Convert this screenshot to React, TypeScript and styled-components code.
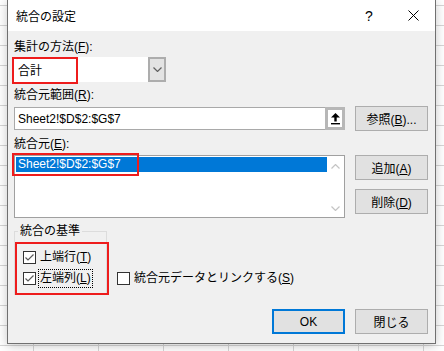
import styled, { createGlobalStyle } from 'styled-components';

const GlobalStyle = createGlobalStyle`
  html, body {
    margin: 0;
    height: 100%;
  }
  body {
    font-family: "Liberation Sans", "Noto Sans CJK JP", sans-serif;
    font-size: 12px;
    color: #000;
    overflow: hidden;
    background-color: #fff;
    background-image:
      linear-gradient(to right, #d6d6d6 1px, transparent 1px),
      linear-gradient(to bottom, #d6d6d6 1px, transparent 1px);
    background-size: 65px 20px;
    background-position: 33px 5px;
  }
`;

const Dialog = styled.div`
  box-sizing: border-box;
  width: 429px;
  margin: -1px 0 0 7px;
  border: 1px solid #707070;
  background: #f0f0f0;
  box-shadow: 0 2px 10px rgba(0, 0, 0, 0.22);
`;

const TitleBar = styled.div`
  display: flex;
  align-items: center;
  height: 31px;
  padding-left: 8px;
  background: #fff;
`;

const TitleText = styled.div`
  flex: 1;
  font-size: 12px;
`;

const CaptionButton = styled.div<{ $w: number }>`
  width: ${(p) => p.$w}px;
  height: 31px;
  display: flex;
  align-items: center;
  justify-content: center;
  font-family: "Liberation Sans", sans-serif;
  font-size: 14px;
`;

const Body = styled.div`
  padding: 8px 7px 9px 6px;
`;

const Label = styled.div<{ $gap: number }>`
  height: 16px;
  line-height: 16px;
  margin-top: ${(p) => p.$gap}px;
`;

const Key = styled.span`
  text-decoration: underline;
  text-underline-offset: 1px;
`;

const Combo = styled.div`
  position: relative;
  display: flex;
  width: 152px;
  height: 25px;
  margin-top: 2px;
`;

const ComboField = styled.div`
  flex: 1;
  display: flex;
  align-items: center;
  padding-left: 4px;
  background: #fff;
`;

const ComboButton = styled.div`
  box-sizing: border-box;
  width: 18px;
  display: flex;
  align-items: center;
  justify-content: center;
  background: #e3e3e3;
  border: 2px solid #adadad;
`;

const RedMark = styled.div<{ $l: number; $t: number; $w: number; $h: number }>`
  position: absolute;
  left: ${(p) => p.$l}px;
  top: ${(p) => p.$t}px;
  width: ${(p) => p.$w}px;
  height: ${(p) => p.$h}px;
  box-sizing: border-box;
  border: 2px solid #ee1c1c;
  pointer-events: none;
`;

const Row = styled.div<{ $gap: number; $align: string }>`
  display: grid;
  grid-template-columns: 331px 73px;
  column-gap: 10px;
  align-items: ${(p) => p.$align};
  margin-top: ${(p) => p.$gap}px;
`;

const RefInput = styled.div`
  display: flex;
  height: 23px;
`;

const RefField = styled.div`
  flex: 1;
  display: flex;
  align-items: center;
  padding-left: 3px;
  background: #fff;
  border: 1px solid #a9a9a9;
  border-right: none;
`;

const PickButton = styled.div`
  box-sizing: border-box;
  width: 20px;
  display: flex;
  align-items: center;
  justify-content: center;
  background: #fff;
  border: 3px solid #b7b7b7;
`;

const Button = styled.button<{ $primary?: boolean }>`
  box-sizing: border-box;
  width: 73px;
  height: 25px;
  padding: 0;
  font: inherit;
  color: #000;
  background: #e1e1e1;
  border: ${(p) => (p.$primary ? '2px solid #0078d7' : '1px solid #adadad')};
`;

const ButtonColumn = styled.div`
  display: flex;
  flex-direction: column;
  gap: 9px;
`;

const ListBox = styled.div`
  box-sizing: border-box;
  height: 63px;
  display: flex;
  background: #fff;
  border: 1px solid #a0a0a0;
`;

const ListItems = styled.div`
  flex: 1;
  padding: 1px 0 0 1px;
`;

const ListItem = styled.div<{ $selected?: boolean }>`
  position: relative;
  height: 15px;
  line-height: 15px;
  padding-left: 2px;
  color: ${(p) => (p.$selected ? '#fff' : '#000')};
  background: ${(p) => (p.$selected ? '#0078d7' : 'transparent')};
`;

const ScrollBar = styled.div`
  width: 17px;
  display: flex;
  flex-direction: column;
  justify-content: space-between;
  align-items: center;
  padding: 8px 0 6px;
`;

const Bottom = styled.div`
  display: flex;
  align-items: flex-start;
  margin-top: 5px;
`;

const Group = styled.fieldset`
  box-sizing: border-box;
  width: 93px;
  margin: 0;
  padding: 0;
  min-width: 0;
  border: 1px solid #dcdcdc;
`;

const Legend = styled.legend`
  margin-left: 3px;
  padding: 0 2px;
  line-height: 16px;
`;

const CheckList = styled.div`
  position: relative;
  display: flex;
  flex-direction: column;
  gap: 1px;
  padding: 8px 0 6px 8px;
`;

const CheckRow = styled.div<{ $top?: number }>`
  display: flex;
  align-items: center;
  height: 20px;
  margin-top: ${(p) => p.$top ?? 0}px;
  white-space: nowrap;
`;

const Box = styled.div`
  box-sizing: border-box;
  width: 13px;
  height: 13px;
  flex: none;
  display: flex;
  align-items: center;
  justify-content: center;
  background: #fff;
  border: 1px solid #333;
`;

const CheckText = styled.span<{ $focus?: boolean }>`
  margin-left: 2px;
  padding: 1px;
  line-height: 15px;
  border: 1px dotted ${(p) => (p.$focus ? '#000' : 'transparent')};
`;

const LinkOption = styled(CheckRow)`
  margin-left: 10px;
`;

const Footer = styled.div`
  display: flex;
  justify-content: flex-end;
  gap: 10px;
  margin-top: 14px;
`;

const Chevron = ({ up, color }: { up?: boolean; color: string }) => (
  <svg width="9" height="5" viewBox="0 0 9 5">
    <polyline
      points={up ? '0.5,4.5 4.5,0.5 8.5,4.5' : '0.5,0.5 4.5,4.5 8.5,0.5'}
      fill="none"
      stroke={color}
      strokeWidth="1.2"
    />
  </svg>
);

const Check = ({ checked, label, keyChar, focus }: { checked: boolean; label: string; keyChar: string; focus?: boolean }) => (
  <>
    <Box>
      {checked && (
        <svg width="11" height="11" viewBox="0 0 11 11">
          <polyline points="1.5,5.5 4,8 9.5,2.5" fill="none" stroke="#5a5a5a" strokeWidth="1.2" />
        </svg>
      )}
    </Box>
    <CheckText $focus={focus}>
      {label}(<Key>{keyChar}</Key>)
    </CheckText>
  </>
);

const App = () => {
  return (
    <>
      <GlobalStyle />
      <Dialog>
        <TitleBar>
          <TitleText>統合の設定</TitleText>
          <CaptionButton $w={46}>?</CaptionButton>
          <CaptionButton $w={43}>
            <svg width="11" height="11" viewBox="0 0 11 11">
              <path d="M0.5 0.5 L10.5 10.5 M10.5 0.5 L0.5 10.5" stroke="#000" strokeWidth="1" />
            </svg>
          </CaptionButton>
        </TitleBar>
        <Body>
          <Label $gap={0}>
            集計の方法(<Key>F</Key>):
          </Label>
          <Combo>
            <ComboField>合計</ComboField>
            <ComboButton>
              <Chevron color="#606060" />
            </ComboButton>
            <RedMark $l={-2} $t={0} $w={66} $h={27} />
          </Combo>

          <Label $gap={5}>
            統合元範囲(<Key>R</Key>):
          </Label>
          <Row $gap={3} $align="center">
            <RefInput>
              <RefField>Sheet2!$D$2:$G$7</RefField>
              <PickButton>
                <svg width="9" height="12" viewBox="0 0 9 12">
                  <polygon points="4.5,0 0,4.5 9,4.5" fill="#000" />
                  <rect x="3.3" y="4" width="2.4" height="4.5" fill="#000" />
                  <rect x="0" y="10" width="9" height="1.4" fill="#000" />
                </svg>
              </PickButton>
            </RefInput>
            <Button>
              参照(<Key>B</Key>)...
            </Button>
          </Row>

          <Label $gap={5}>
            統合元(<Key>E</Key>):
          </Label>
          <Row $gap={3} $align="start">
            <ListBox>
              <ListItems>
                <ListItem $selected>
                  Sheet2!$D$2:$G$7
                  <RedMark $l={-4} $t={-4} $w={127} $h={23} />
                </ListItem>
              </ListItems>
              <ScrollBar>
                <Chevron up color="#c4c4c4" />
                <Chevron color="#c4c4c4" />
              </ScrollBar>
            </ListBox>
            <ButtonColumn>
              <Button>
                追加(<Key>A</Key>)
              </Button>
              <Button>
                削除(<Key>D</Key>)
              </Button>
            </ButtonColumn>
          </Row>

          <Bottom>
            <Group>
              <Legend>統合の基準</Legend>
              <CheckList>
                <CheckRow>
                  <Check checked label="上端行" keyChar="T" />
                </CheckRow>
                <CheckRow>
                  <Check checked label="左端列" keyChar="L" focus />
                </CheckRow>
                <RedMark $l={0} $t={3} $w={94} $h={53} />
              </CheckList>
            </Group>
            <LinkOption $top={45}>
              <Check checked={false} label="統合元データとリンクする" keyChar="S" />
            </LinkOption>
          </Bottom>

          <Footer>
            <Button $primary>OK</Button>
            <Button>閉じる</Button>
          </Footer>
        </Body>
      </Dialog>
    </>
  );
};

export default App;
